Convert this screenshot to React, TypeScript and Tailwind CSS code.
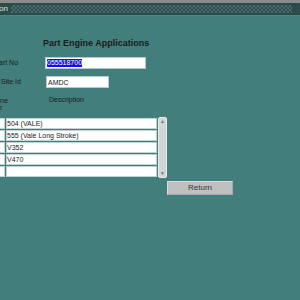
const rows = ['504 (VALE)', '555 (Vale Long Stroke)', 'V352', 'V470', ''];

const App = () => {
  return (
    <div className="w-[300px] h-[300px] overflow-hidden bg-[#417e7c] font-['Liberation_Sans',Arial,sans-serif] text-[#1b1b1b]">
      <div className="h-[3px] bg-[#8c8c8c]" />
      <div className="h-[12px] bg-[#2d4b4a] flex items-center">
        <span className="text-[8px] leading-none text-[#dfe6e6] -ml-[1px]">on</span>
        <div className="flex-1 h-[8px] ml-[3px] mr-[8px] bg-[repeating-conic-gradient(#46706f_0_25%,#2f4d4c_0_50%)] bg-[length:4px_4px]" />
      </div>
      <div className="h-[1px] bg-[#4f8583]" />

      <div className="ml-[43px] mt-[23px] text-[9px] font-bold leading-none">Part Engine Applications</div>

      <div className="mt-[9px] flex items-center h-[12px]">
        <span className="w-[46px] text-[7px] -ml-[1px]">art No</span>
        <div className="w-[101px] h-[12px] bg-white border border-[#b7c8c8] flex items-center px-[1px]">
          <span className="bg-[#1010ee] text-white text-[7px] leading-[8px]">055518700</span>
        </div>
      </div>

      <div className="mt-[7px] flex items-center h-[12px]">
        <span className="w-[46px] text-[7px] pl-[1px]">Site Id</span>
        <div className="w-[63px] h-[12px] bg-white border border-[#b7c8c8] flex items-center px-[1px]">
          <span className="text-[7px] leading-none">AMDC</span>
        </div>
      </div>

      <div className="mt-[8px] flex text-[7px] leading-[7px] h-[22px]">
        <div className="w-[49px] pt-[1px]">
          <div>ne</div>
          <div>r</div>
        </div>
        <div>Description</div>
      </div>

      <div className="flex">
        <div className="flex flex-col gap-[1px]">
          {rows.map((r, i) => (
            <div key={i} className="flex gap-[1px] h-[11px]">
              <div className="w-[5px] bg-white border border-l-0 border-[#c4d2d2]" />
              <div className="w-[151px] bg-white border border-[#c4d2d2] flex items-center text-[7px] leading-none">
                {r}
              </div>
            </div>
          ))}
        </div>
        <div className="ml-[1px] -mt-[1px] h-[61px] w-[9px] bg-[#d4d4d4] border border-[#e6eeee] rounded-[2px] flex flex-col justify-between items-center text-[5px] text-[#777] leading-none py-[1px]">
          <span>▲</span>
          <span>▼</span>
        </div>
      </div>

      <div className="mt-[3px] ml-[167px] w-[66px] h-[14px] bg-[#c0c0c0] border border-[#a8a8a8] border-t-[#dcdcdc] border-l-[#dcdcdc] flex items-center justify-center text-[8px] text-[#333]">
        Return
      </div>
    </div>
  );
};

export default App;
